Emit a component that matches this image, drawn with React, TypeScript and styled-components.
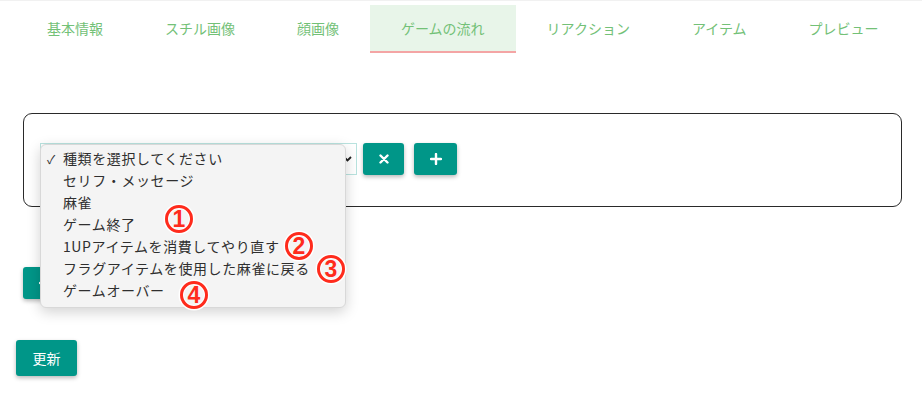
import React from "react";
import styled, { createGlobalStyle } from "styled-components";

const GlobalStyle = createGlobalStyle`
  html, body { margin: 0; padding: 0; background: #fff; }
  body { font-family: "Noto Sans CJK JP", "Noto Sans", sans-serif; }
`;

const Page = styled.div`
  position: relative;
  width: 922px;
  height: 397px;
  border-top: 1px solid #f1f1f1;
  box-sizing: border-box;
  overflow: hidden;
`;

const TabBar = styled.nav`
  display: flex;
  padding-left: 16px;
  margin-top: 4px;
`;

const Tab = styled.div<{ $active?: boolean }>`
  display: flex;
  align-items: center;
  height: 46px;
  padding: 0 31px;
  font-size: 14px;
  color: #73c177;
  background: ${(p) => (p.$active ? "#e8f5e9" : "transparent")};
  border-bottom: 2px solid ${(p) => (p.$active ? "#f4a5a5" : "transparent")};
  white-space: nowrap;
`;

const Content = styled.div`
  padding: 0 20px 0 16px;
`;

const FlowBox = styled.div`
  margin: 60px 0 0 7px;
  border: 1px solid #2a2a2a;
  border-radius: 9px;
  padding: 29px 16px 31px;
`;

const Row = styled.div`
  display: flex;
  align-items: center;
`;

const SelectWrap = styled.div`
  position: relative;
  width: 317px;
  height: 32px;
  box-sizing: border-box;
  border: 1px solid #b9e3df;
  margin-right: 6px;
`;

const Chevron = styled.svg`
  position: absolute;
  right: 4px;
  top: 11px;
`;

const Menu = styled.ul`
  position: absolute;
  left: -1px;
  top: 0px;
  width: 306px;
  margin: 0;
  padding: 2px 0 6px;
  list-style: none;
  background: #f4f4f4;
  border: 1px solid #d8d8d8;
  border-radius: 6px;
  box-shadow: 0 4px 14px rgba(0, 0, 0, 0.18);
  box-sizing: border-box;
  z-index: 5;
`;

const MenuItem = styled.li`
  display: flex;
  align-items: center;
  height: 22px;
  padding-left: 6px;
  font-size: 14px;
  letter-spacing: 0.6px;
  color: #2f2f2f;
  white-space: nowrap;
`;

const Check = styled.span`
  width: 16px;
  font-size: 12px;
  letter-spacing: 0;
  color: #333;
`;

const TealButton = styled.button<{ $w: number; $h?: number }>`
  display: flex;
  align-items: center;
  justify-content: center;
  width: ${(p) => p.$w}px;
  height: ${(p) => p.$h ?? 32}px;
  padding: 0;
  border: none;
  border-radius: 3px;
  background: #009688;
  color: #fff;
  font-family: inherit;
  font-size: 14px;
  box-shadow: 0 2px 4px rgba(0, 0, 0, 0.28);
  margin-right: 10px;
`;

const AddRow = styled.div`
  margin: 60px 0 0 7px;
`;

const SubmitRow = styled.div`
  margin-top: 41px;
`;

const Badge = styled.span<{ $x: number; $y: number }>`
  position: absolute;
  left: ${(p) => p.$x - 14}px;
  top: ${(p) => p.$y - 14}px;
  width: 28px;
  height: 28px;
  box-sizing: border-box;
  border: 3px solid #ff2b1c;
  border-radius: 50%;
  display: flex;
  align-items: center;
  justify-content: center;
  color: #ff2b1c;
  font-family: "Liberation Sans", sans-serif;
  font-weight: bold;
  font-size: 23px;
  line-height: 1;
  padding-top: 1px;
  box-shadow: 0 0 0 1.5px #fff, inset 0 0 0 1px #fff;
  z-index: 10;
`;

const tabs = ["基本情報", "スチル画像", "顔画像", "ゲームの流れ", "リアクション", "アイテム", "プレビュー"];
const options = [
  "種類を選択してください",
  "セリフ・メッセージ",
  "麻雀",
  "ゲーム終了",
  "1UPアイテムを消費してやり直す",
  "フラグアイテムを使用した麻雀に戻る",
  "ゲームオーバー",
];

const XIcon = () => (
  <svg width="10" height="10" viewBox="0 0 10 10">
    <path d="M1.5 1.5 L8.5 8.5 M8.5 1.5 L1.5 8.5" stroke="#fff" strokeWidth="2.4" strokeLinecap="round" />
  </svg>
);

const PlusIcon = () => (
  <svg width="12" height="12" viewBox="0 0 12 12">
    <path d="M6 1 V11 M1 6 H11" stroke="#fff" strokeWidth="2.4" strokeLinecap="round" />
  </svg>
);

export default function App() {
  return (
    <Page>
      <GlobalStyle />
      <TabBar>
        {tabs.map((t, i) => (
          <Tab key={t} $active={i === 3}>
            {t}
          </Tab>
        ))}
      </TabBar>
      <Content>
        <FlowBox>
          <Row>
            <SelectWrap>
              <Chevron width="9" height="7" viewBox="0 0 9 7">
                <path d="M1 2 L4.5 5.5 L8 2" stroke="#222" strokeWidth="1.8" fill="none" />
              </Chevron>
              <Menu>
                {options.map((o, i) => (
                  <MenuItem key={o}>
                    <Check>{i === 0 ? "✓" : ""}</Check>
                    {o}
                  </MenuItem>
                ))}
              </Menu>
            </SelectWrap>
            <TealButton $w={41}>
              <XIcon />
            </TealButton>
            <TealButton $w={43}>
              <PlusIcon />
            </TealButton>
          </Row>
        </FlowBox>
        <AddRow>
          <TealButton $w={43}>
            <PlusIcon />
          </TealButton>
        </AddRow>
        <SubmitRow>
          <TealButton $w={61} $h={36}>
            更新
          </TealButton>
        </SubmitRow>
      </Content>
      <Badge $x={179} $y={218}>1</Badge>
      <Badge $x={299} $y={245}>2</Badge>
      <Badge $x={331} $y={268}>3</Badge>
      <Badge $x={194} $y={294}>4</Badge>
    </Page>
  );
}
